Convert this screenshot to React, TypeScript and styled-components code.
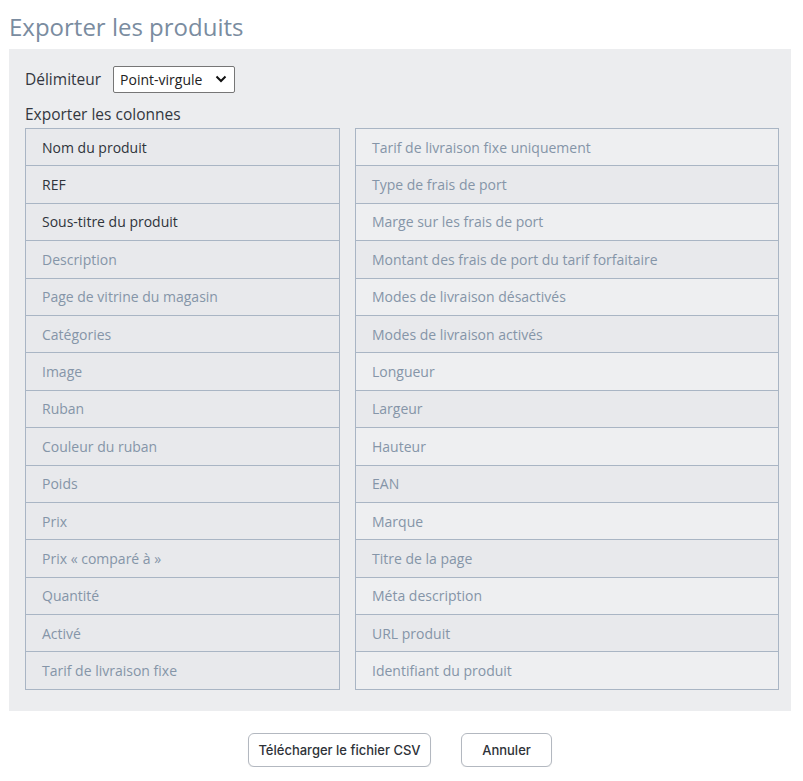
import React from "react";
import styled, { createGlobalStyle } from "styled-components";

const Global = createGlobalStyle`
  html, body { margin: 0; padding: 0; background: #ffffff; }
  body { font-family: "Open Sans", "Noto Sans", sans-serif; }
`;

const Page = styled.div`
  padding: 0 12px 0 9px;
  width: 803px;
  box-sizing: border-box;
`;

const Title = styled.h1`
  margin: 0;
  height: 49px;
  padding-top: 11px;
  box-sizing: border-box;
  font-family: "Open Sans", "Noto Sans", sans-serif;
  font-weight: 400;
  font-size: 24px;
  line-height: 32px;
  color: #7a8ca0;
`;

const Panel = styled.div`
  background: #ecedef;
  padding: 17px 13px 21px 16px;
`;

const FieldRow = styled.div`
  display: flex;
  align-items: center;
  gap: 12px;
  height: 26px;
`;

const Label = styled.span`
  font-size: 15.5px;
  color: #333740;
`;

const SelectWrap = styled.div`
  position: relative;
  display: inline-flex;
`;

const Select = styled.select`
  appearance: none;
  -webkit-appearance: none;
  height: 27px;
  width: 122px;
  box-sizing: border-box;
  border: 1px solid #767676;
  border-radius: 2px;
  background: #ffffff;
  padding: 0 0 0 6px;
  font-family: "Open Sans", "Noto Sans", sans-serif;
  font-size: 14px;
  color: #222;
  outline: none;
`;

const Chevron = styled.svg`
  position: absolute;
  right: 8px;
  top: 9px;
  pointer-events: none;
`;

const SubLabel = styled.div`
  margin-top: 10px;
  font-size: 15.5px;
  line-height: 24px;
  height: 26px;
  color: #333740;
`;

const Columns = styled.div`
  display: grid;
  grid-template-columns: 315px 424px;
  column-gap: 15px;
  align-items: start;
`;

const List = styled.div`
  border: 1px solid #a9b5c4;
  display: flex;
  flex-direction: column;
`;

const Row = styled.div<{ $active: boolean; $light: boolean }>`
  height: 36.4px;
  box-sizing: content-box;
  display: flex;
  align-items: center;
  padding-left: 16px;
  font-size: 14px;
  background: ${(p) => (p.$light ? "#eeeff1" : "#e8e9ec")};
  color: ${(p) => (p.$active ? "#2f343b" : "#8595a8")};
  & + & {
    border-top: 1px solid #a9b5c4;
  }
`;

const Actions = styled.div`
  display: flex;
  justify-content: center;
  gap: 30px;
  padding: 22px 0 0 0;
`;

const Button = styled.button<{ $w: number }>`
  width: ${(p) => p.$w}px;
  height: 34px;
  border: 1px solid #b3b8c0;
  border-radius: 6px;
  background: #ffffff;
  font-family: "Inter", "Lato", sans-serif;
  font-weight: 500;
  font-size: 13px;
  color: #2e3238;
  box-shadow: 0 1px 1px rgba(0, 0, 0, 0.08);
  cursor: pointer;
  padding: 0;
`;

const left = [
  ["Nom du produit", true],
  ["REF", true],
  ["Sous-titre du produit", true],
  ["Description", false],
  ["Page de vitrine du magasin", false],
  ["Catégories", false],
  ["Image", false],
  ["Ruban", false],
  ["Couleur du ruban", false],
  ["Poids", false],
  ["Prix", false],
  ["Prix « comparé à »", false],
  ["Quantité", false],
  ["Activé", false],
  ["Tarif de livraison fixe", false],
] as const;

const right = [
  "Tarif de livraison fixe uniquement",
  "Type de frais de port",
  "Marge sur les frais de port",
  "Montant des frais de port du tarif forfaitaire",
  "Modes de livraison désactivés",
  "Modes de livraison activés",
  "Longueur",
  "Largeur",
  "Hauteur",
  "EAN",
  "Marque",
  "Titre de la page",
  "Méta description",
  "URL produit",
  "Identifiant du produit",
];

export default function App() {
  return (
    <Page>
      <Global />
      <Title>Exporter les produits</Title>
      <Panel>
        <FieldRow>
          <Label>Délimiteur</Label>
          <SelectWrap>
            <Select defaultValue="pv">
              <option value="pv">Point-virgule</option>
              <option value="v">Virgule</option>
            </Select>
            <Chevron width="12" height="8" viewBox="0 0 12 8">
              <path d="M1.5 1.5 L6 6 L10.5 1.5" fill="none" stroke="#111" strokeWidth="2" />
            </Chevron>
          </SelectWrap>
        </FieldRow>
        <SubLabel>Exporter les colonnes</SubLabel>
        <Columns>
          <List>
            {left.map(([t, a]) => (
              <Row key={t} $active={a} $light={false}>
                {t}
              </Row>
            ))}
          </List>
          <List>
            {right.map((t, i) => (
              <Row key={t} $active={false} $light={i % 2 === 0}>
                {t}
              </Row>
            ))}
          </List>
        </Columns>
      </Panel>
      <Actions>
        <Button $w={183}>Télécharger le fichier CSV</Button>
        <Button $w={91}>Annuler</Button>
      </Actions>
    </Page>
  );
}
